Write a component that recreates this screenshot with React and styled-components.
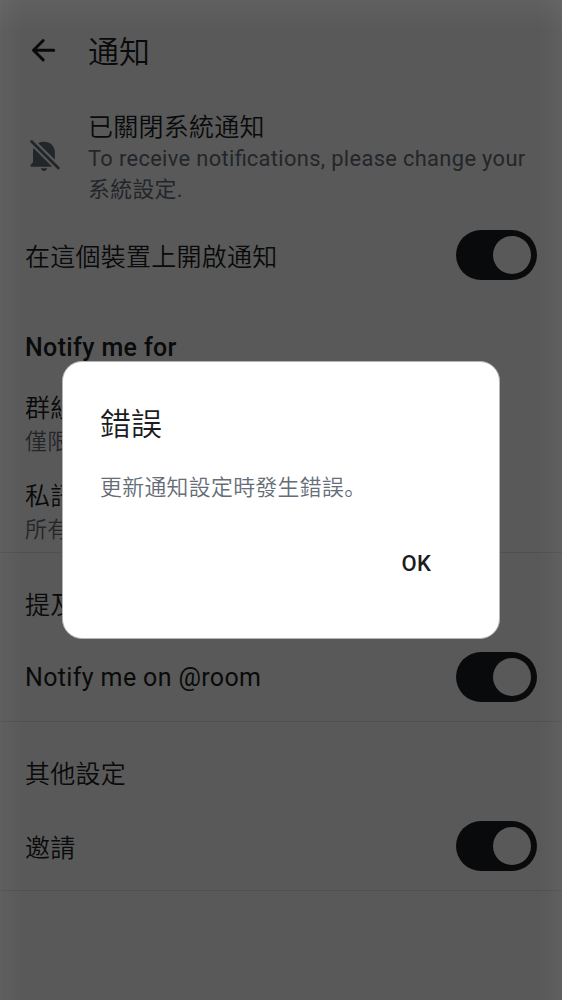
import React from "react";
import styled, { createGlobalStyle } from "styled-components";

const GlobalStyle = createGlobalStyle`
  * { box-sizing: border-box; }
  body {
    margin: 0;
    background: #fff;
    color: #1b1d22;
    font-family: Roboto, "Noto Sans CJK SC", sans-serif;
  }
`;

const Screen = styled.main`
  height: 1000px;
  overflow: hidden;
  background: #fff;
`;

const TopBar = styled.header`
  display: flex;
  align-items: center;
  height: 100px;
  padding-left: 25px;
  gap: 26px;
`;

const BackButton = styled.button`
  display: flex;
  width: 37px;
  height: 37px;
  padding: 0;
  border: 0;
  background: none;
  color: inherit;
`;

const PageTitle = styled.h1`
  margin: 5px 0 0;
  font-size: 31px;
  line-height: 40px;
  font-weight: 350;
`;

const Banner = styled.section`
  display: flex;
  align-items: center;
  height: 111px;
  padding: 0 25px;
  gap: 25px;
`;

const BannerIcon = styled.div`
  display: flex;
  flex: none;
  width: 38px;
  color: #656d77;
`;

const weights = { demilight: 350, regular: 400, medium: 500 };

const Label = styled.div`
  padding-top: ${(p) => (p.$latin ? 2 : 6)}px;
  font-size: 25px;
  line-height: 30px;
  font-weight: ${(p) => weights[p.$weight || "demilight"]};
  letter-spacing: ${(p) => (p.$latin ? 0.36 : 0.25)}px;
  white-space: nowrap;
`;

const Detail = styled.div`
  color: #656d77;
  font-size: 21.85px;
  line-height: 31px;
  font-weight: ${(p) => weights[p.$weight || "demilight"]};
  letter-spacing: 0.35px;
`;

const Ligature = styled.span`
  letter-spacing: 0;
`;

const OptionText = styled.div`
  display: flex;
  flex-direction: column;
  gap: 2px;
  padding-top: 4px;
`;

const Row = styled.div`
  display: flex;
  align-items: center;
  justify-content: space-between;
  height: 88px;
  padding: 0 25px;
`;

const SectionHeading = styled.div`
  display: flex;
  align-items: flex-end;
  height: ${(p) => p.$height}px;
  padding: 0 25px ${(p) => p.$bottom || 12}px;
`;

const Group = styled.section`
  border-bottom: 1px solid #e6e6e8;
`;

const Switch = styled.button`
  display: flex;
  justify-content: flex-end;
  flex: none;
  width: 81px;
  height: 50px;
  padding: 6px;
  border: 0;
  border-radius: 25px;
  background: #1b1d22;
`;

const Thumb = styled.span`
  width: 38px;
  height: 38px;
  border-radius: 50%;
  background: #fff;
`;

const Scrim = styled.div`
  position: fixed;
  inset: 0;
  display: flex;
  align-items: center;
  justify-content: center;
  background:
    linear-gradient(to bottom, rgba(255, 255, 255, 0.045), transparent 30px),
    linear-gradient(to right, rgba(255, 255, 255, 0.04), transparent 22px),
    linear-gradient(to left, rgba(255, 255, 255, 0.04), transparent 22px),
    rgba(0, 0, 0, 0.65);
`;

const Dialog = styled.div`
  width: 438px;
  height: 278px;
  padding: 43px 37px 0;
  border: 1px solid #b4b4b4;
  border-radius: 20px;
  background: #fff;
`;

const DialogTitle = styled.h2`
  margin: 0 0 27px;
  font-size: 31px;
  line-height: 40px;
  font-weight: 350;
`;

const Actions = styled.div`
  display: flex;
  justify-content: flex-end;
  padding: 43px 31px 0 0;
`;

const TextButton = styled.button`
  padding: 0;
  border: 0;
  background: none;
  color: #1b1d22;
  font: 500 22px/36px Roboto, sans-serif;
  letter-spacing: 0.2px;
`;

const BackArrow = () => (
  <svg width="37" height="37" viewBox="0 0 37 37" fill="none" stroke="currentColor" strokeWidth="3" strokeLinecap="round" strokeLinejoin="round">
    <path d="M28.7 18.2H8.5M18.2 8.5L8.5 18.2L18.2 27.9" />
  </svg>
);

const BellOff = () => (
  <svg width="38" height="38" viewBox="0 0 38 38" fill="currentColor">
    <path d="M13.2 6.2C14.8 5.2 17 4.8 19 4.8C25.5 4.8 29.9 9.5 29.9 15.5V22.8Z" />
    <path d="M8.5 11L27.2 29.7H6.7C5.3 29.7 5 28.1 6 27.2L8 25.3V15C8 13.6 8.1 12.3 8.5 11Z" />
    <path d="M15.8 31.3H22.2C21.7 33.1 20.6 34 19 34S16.3 33.1 15.8 31.3Z" />
    <path d="M6.6 4.4L33.3 30.9" fill="none" stroke="currentColor" strokeWidth="2.8" strokeLinecap="round" />
  </svg>
);

const Toggle = ({ label }) => (
  <Switch role="switch" aria-checked="true" aria-label={label}>
    <Thumb />
  </Switch>
);

const SwitchRow = ({ label, latin }) => (
  <Row>
    <Label $latin={latin} $weight={latin ? "regular" : "demilight"}>{label}</Label>
    <Toggle label={label} />
  </Row>
);

const OptionRow = ({ label, detail }) => (
  <Row>
    <OptionText>
      <Label>{label}</Label>
      <Detail>{detail}</Detail>
    </OptionText>
  </Row>
);

export default function App() {
  return (
    <>
      <GlobalStyle />
      <Screen>
        <TopBar>
          <BackButton aria-label="返回"><BackArrow /></BackButton>
          <PageTitle>通知</PageTitle>
        </TopBar>
        <Banner>
          <BannerIcon><BellOff /></BannerIcon>
          <div>
            <Label>已關閉系統通知</Label>
            <Detail $weight="regular">To receive noti<Ligature>fi</Ligature>cations, please change your 系統設定.</Detail>
          </div>
        </Banner>
        <SwitchRow label="在這個裝置上開啟通知" />
        <Group>
          <SectionHeading $height={77} $bottom={13}><Label $weight="medium" $latin>Notify me for</Label></SectionHeading>
          <OptionRow label="群組" detail="僅限" />
          <OptionRow label="私訊" detail="所有" />
        </Group>
        <Group>
          <SectionHeading $height={80}><Label>提及</Label></SectionHeading>
          <SwitchRow label="Notify me on @room" latin />
        </Group>
        <Group>
          <SectionHeading $height={80}><Label>其他設定</Label></SectionHeading>
          <SwitchRow label="邀請" />
        </Group>
      </Screen>
      <Scrim>
        <Dialog role="dialog" aria-modal="true">
          <DialogTitle>錯誤</DialogTitle>
          <Detail>更新通知設定時發生錯誤。</Detail>
          <Actions><TextButton>OK</TextButton></Actions>
        </Dialog>
      </Scrim>
    </>
  );
}
